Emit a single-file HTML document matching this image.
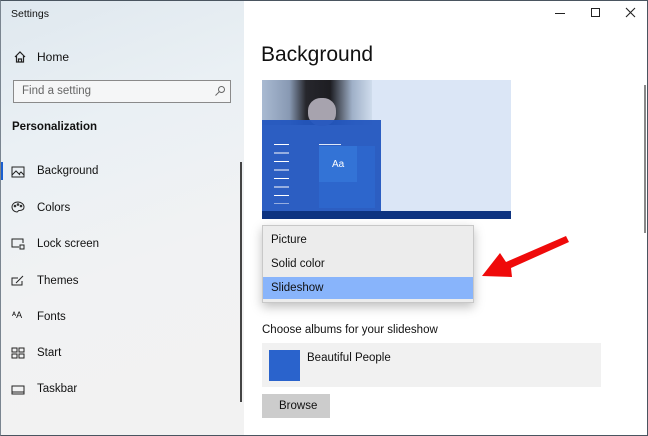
<!DOCTYPE html>
<html><head><style>
*{margin:0;padding:0;box-sizing:border-box}
body{width:648px;height:436px;overflow:hidden;font-family:"Liberation Sans",sans-serif;background:#fff;position:relative}
.abs{position:absolute}
.side{left:0;top:0;width:244px;height:436px;background:linear-gradient(160deg,#dfe8ef 0%,#eaf0f4 30%,#f1f2f3 60%,#f2f2f2 100%)}
.t{font-size:12px;color:#111;white-space:nowrap}
.nav{font-size:11.5px;color:#111;left:37px}
.ic{left:11px;width:14px;height:12px}
</style></head><body>
<div class="abs side"></div>
<div class="abs t" style="left:11px;top:8px;font-size:10.5px">Settings</div>
<svg class="abs" style="left:13px;top:50px" width="14" height="14" viewBox="0 0 14 14" fill="none" stroke="#222" stroke-width="1.2"><path d="M2 7 L7 2 L12 7 M3.5 6 V12 H10.5 V6 M5.5 12 V9 H8.5 V12"/></svg>
<div class="abs t" style="left:37px;top:50px">Home</div>
<div class="abs" style="left:13px;top:80px;width:218px;height:23px;border:1px solid #8a8a8a;background:#f5f6f7"></div>
<div class="abs t" style="left:22px;top:85px;color:#666;font-size:11.5px">Find a setting</div>
<svg class="abs" style="left:214px;top:85px" width="12" height="12" viewBox="0 0 12 12" fill="none" stroke="#666"><circle cx="7.5" cy="4.5" r="3"/><path d="M5.3 6.7 L1.5 10.5"/></svg>
<div class="abs t" style="left:12px;top:121px;font-weight:bold;font-size:11.5px">Personalization</div>
<div class="abs" style="left:0;top:162px;width:3px;height:18px;background:#1a5fd0"></div>
<div class="abs" style="left:240px;top:162px;width:2px;height:240px;background:#444"></div>

<svg class="abs ic" style="top:166px" viewBox="0 0 14 12" fill="none" stroke="#222"><rect x="1" y="1" width="12" height="10"/><path d="M1 9 L5 5 L9 9 M8 8 L10 6 L13 9"/></svg>
<div class="abs nav" style="top:165px">Background</div>
<svg class="abs ic" style="top:201px" viewBox="0 0 14 12" fill="none" stroke="#222"><path d="M7 1 C3 1 1 3.5 1 6 C1 9 3.5 11 6 11 C7 11 7 9.5 8 9.5 C10 9.5 13 9 13 6 C13 3 10 1 7 1Z"/><circle cx="4" cy="5" r=".8"/><circle cx="7" cy="3.5" r=".8"/><circle cx="10" cy="5" r=".8"/></svg>
<div class="abs nav" style="top:202px">Colors</div>
<svg class="abs ic" style="top:238px" viewBox="0 0 14 12" fill="none" stroke="#222"><path d="M8 9 H1 V1 H12 V5"/><rect x="9" y="7" width="4" height="4"/></svg>
<div class="abs nav" style="top:238px">Lock screen</div>
<svg class="abs ic" style="top:275px" viewBox="0 0 14 12" fill="none" stroke="#222"><path d="M7 3 H1 V10 H11 V6"/><path d="M5 8 L12 1"/></svg>
<div class="abs nav" style="top:275px">Themes</div>
<div class="abs t" style="left:12px;top:310px;font-size:9px">ᴬA</div>
<div class="abs nav" style="top:311px">Fonts</div>
<svg class="abs ic" style="top:347px" viewBox="0 0 14 12" fill="none" stroke="#222"><rect x="1" y="1" width="5" height="4"/><rect x="8" y="1" width="5" height="4"/><rect x="1" y="7" width="5" height="4"/><rect x="8" y="7" width="5" height="4"/></svg>
<div class="abs nav" style="top:347px">Start</div>
<svg class="abs ic" style="top:384px" viewBox="0 0 14 12" fill="none" stroke="#222"><rect x="1" y="2" width="12" height="8"/><path d="M1 8 H13"/></svg>
<div class="abs nav" style="top:383px">Taskbar</div>

<div class="abs" style="left:555px;top:13px;width:10px;height:1px;background:#222"></div>
<div class="abs" style="left:591px;top:8px;width:9px;height:9px;border:1px solid #222"></div>
<svg class="abs" style="left:625px;top:7px" width="11" height="11" viewBox="0 0 11 11" stroke="#222" stroke-width="1.1"><path d="M1 1 L10 10 M10 1 L1 10"/></svg>
<div class="abs" style="left:644px;top:85px;width:2px;height:148px;background:#888"></div>

<div class="abs t" style="left:261px;top:43px;font-size:21px">Background</div>
<div class="abs" style="left:262px;top:80px;width:249px;height:139px;background:#dbe6f6;overflow:hidden">
 <div class="abs" style="left:0;top:0;width:110px;height:45px;background:linear-gradient(90deg,#a9bad2,#8899b3 25%,#26262c 40%,#1d1d22 62%,#9fb0c8 82%,#cfdcec)"></div>
 <div class="abs" style="left:46px;top:18px;width:28px;height:28px;border-radius:45%;background:#a7a3ae"></div>
 <div class="abs" style="left:0;top:40px;width:119px;height:91px;background:#2356bf;opacity:.95"></div>
 <div class="abs" style="left:57px;top:66px;width:56px;height:62px;background:#2d66cc"></div>
 <div class="abs" style="left:57px;top:66px;width:38px;height:36px;background:#3373d6"></div>
 <div class="abs" style="left:70px;top:79px;color:#fff;font-size:10px">Aa</div>
 <div class="abs" style="left:57px;top:64px;width:22px;height:1px;background:#dfe8f7"></div>
 <div class="abs" style="left:12px;top:64px;width:15px;height:60px;background:repeating-linear-gradient(#fff 0 1px,transparent 1px 8.5px)"></div>
 <div class="abs" style="left:0;top:131px;width:249px;height:8px;background:#0d3380"></div>
</div>

<div class="abs" style="left:262px;top:225px;width:212px;height:78px;background:#ececec;border:1px solid #c8c8c8;box-shadow:0 4px 10px rgba(0,0,0,.25)"></div>
<div class="abs" style="left:263px;top:277px;width:210px;height:22px;background:#88b4fb"></div>
<div class="abs t" style="left:271px;top:234px;font-size:11.5px">Picture</div>
<div class="abs t" style="left:271px;top:258px;font-size:11.5px">Solid color</div>
<div class="abs t" style="left:271px;top:282px;font-size:11.5px">Slideshow</div>

<svg class="abs" style="left:0;top:0" width="648" height="436"><polygon points="482,276 500,253 506,262 566,236 569,242 511,268 512,277" fill="#ef0a0a"/></svg>

<div class="abs t" style="left:262px;top:324px;font-size:11.5px">Choose albums for your slideshow</div>
<div class="abs" style="left:262px;top:343px;width:339px;height:44px;background:#f1f1f1"></div>
<div class="abs" style="left:269px;top:350px;width:31px;height:31px;background:#2a63cc"></div>
<div class="abs t" style="left:307px;top:352px;font-size:11.5px">Beautiful People</div>
<div class="abs" style="left:262px;top:394px;width:68px;height:24px;background:#cccccc"></div>
<div class="abs t" style="left:279px;top:400px;font-size:11.5px">Browse</div>

<div class="abs" style="left:0;top:0;width:648px;height:436px;border:1px solid #4a5560;border-left-color:#7a8590"></div>
</body></html>
